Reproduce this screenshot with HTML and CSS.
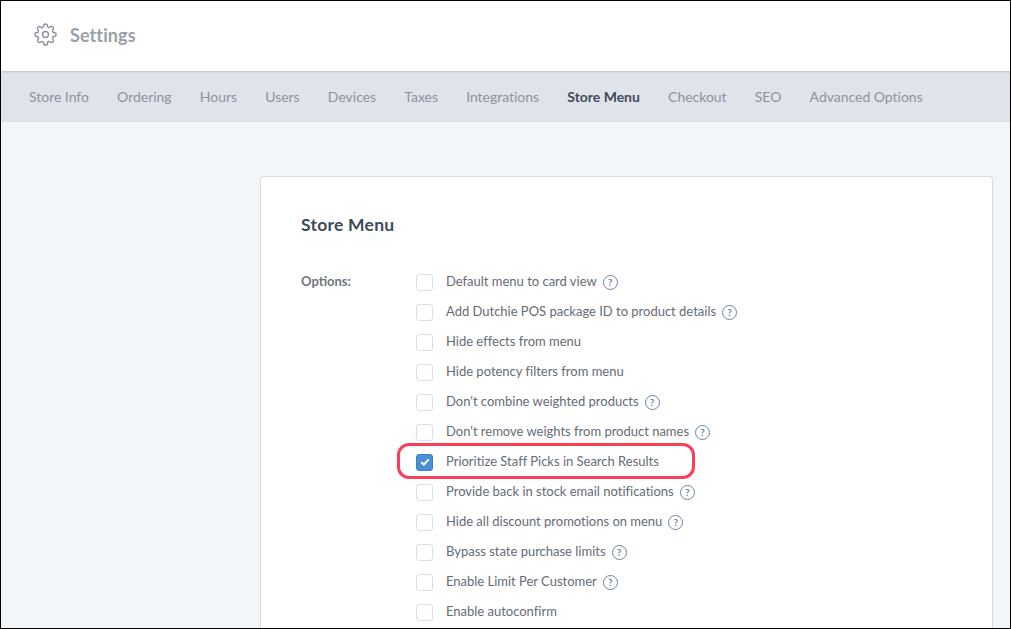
FILE: index.html
```html
<!DOCTYPE html>
<html lang="en">
<head>
<meta charset="utf-8">
<title>Settings</title>
<link rel="stylesheet" href="styles.css">
</head>
<body>
<div class="frame">
  <header class="header">
    <svg class="gear" viewBox="0 0 24 24" width="23" height="23" fill="none" stroke="#8d949e" stroke-width="1.5" stroke-linejoin="round">
      <circle cx="12" cy="12" r="3.1"/>
      <path d="M19.4 15a1.65 1.65 0 0 0 .33 1.82l.06.06a2 2 0 1 1-2.83 2.83l-.06-.06a1.65 1.65 0 0 0-1.82-.33 1.65 1.65 0 0 0-1 1.51V21a2 2 0 1 1-4 0v-.09A1.65 1.65 0 0 0 9 19.4a1.65 1.65 0 0 0-1.82.33l-.06.06a2 2 0 1 1-2.83-2.83l.06-.06A1.65 1.65 0 0 0 4.68 15a1.65 1.65 0 0 0-1.51-1H3a2 2 0 1 1 0-4h.09A1.65 1.65 0 0 0 4.6 9a1.65 1.65 0 0 0-.33-1.82l-.06-.06a2 2 0 1 1 2.83-2.83l.06.06A1.65 1.65 0 0 0 9 4.68a1.65 1.65 0 0 0 1-1.51V3a2 2 0 1 1 4 0v.09a1.65 1.65 0 0 0 1 1.51 1.65 1.65 0 0 0 1.82-.33l.06-.06a2 2 0 1 1 2.83 2.83l-.06.06A1.65 1.65 0 0 0 19.4 9a1.65 1.65 0 0 0 1.51 1H21a2 2 0 1 1 0 4h-.09a1.65 1.65 0 0 0-1.51 1z"/>
    </svg>
    <h1 class="page-title">Settings</h1>
  </header>
  <nav class="tabs">
    <a class="tab">Store Info</a>
    <a class="tab">Ordering</a>
    <a class="tab">Hours</a>
    <a class="tab">Users</a>
    <a class="tab">Devices</a>
    <a class="tab">Taxes</a>
    <a class="tab">Integrations</a>
    <a class="tab active">Store Menu</a>
    <a class="tab">Checkout</a>
    <a class="tab">SEO</a>
    <a class="tab">Advanced Options</a>
  </nav>
  <main class="content">
    <section class="card">
      <h2 class="card-title">Store Menu</h2>
      <div class="options">
        <div class="options-label">Options:</div>
        <ul class="option-list">
          <li class="option"><span class="box"></span><span class="text">Default menu to card view</span><span class="help">?</span></li>
          <li class="option"><span class="box"></span><span class="text">Add Dutchie POS package ID to product details</span><span class="help">?</span></li>
          <li class="option"><span class="box"></span><span class="text">Hide effects from menu</span></li>
          <li class="option"><span class="box"></span><span class="text">Hide potency filters from menu</span></li>
          <li class="option"><span class="box"></span><span class="text">Don't combine weighted products</span><span class="help">?</span></li>
          <li class="option"><span class="box"></span><span class="text">Don't remove weights from product names</span><span class="help">?</span></li>
          <li class="option highlighted"><span class="box checked"><svg viewBox="0 0 10 8" width="10" height="8"><path d="M1.2 4.2 3.8 6.6 8.8 1.4" fill="none" stroke="#fff" stroke-width="2"/></svg></span><span class="text">Prioritize Staff Picks in Search Results</span><span class="ring"></span></li>
          <li class="option"><span class="box"></span><span class="text">Provide back in stock email notifications</span><span class="help">?</span></li>
          <li class="option"><span class="box"></span><span class="text">Hide all discount promotions on menu</span><span class="help">?</span></li>
          <li class="option"><span class="box"></span><span class="text">Bypass state purchase limits</span><span class="help">?</span></li>
          <li class="option"><span class="box"></span><span class="text">Enable Limit Per Customer</span><span class="help">?</span></li>
          <li class="option"><span class="box"></span><span class="text">Enable autoconfirm</span></li>
        </ul>
      </div>
    </section>
  </main>
</div>
</body>
</html>
```
FILE: styles.css
```css
* { box-sizing: border-box; }
html, body { margin: 0; padding: 0; height: 100%; overflow: hidden; }
body { font-family: "Lato", "Liberation Sans", sans-serif; background: #f3f6f9; }
.frame { width: 1011px; height: 629px; border: 1px solid #000; overflow: hidden; background: #f3f6f9; display: flex; flex-direction: column; }
.header { height: 70px; flex: none; background: #fff; display: flex; align-items: center; padding: 0 0 3px 33px; gap: 13px; position: relative; box-shadow: 0 1px 2px rgba(120, 128, 140, .35); }
.gear { flex: none; }
.page-title { margin: 0; font-size: 18px; line-height: 22px; font-weight: 700; color: #9aa0a9; letter-spacing: .1px; }
.tabs { height: 51px; flex: none; background: #dfe3ea; display: flex; align-items: center; padding: 0 0 0 28px; gap: 28.2px; }
.tab { font-size: 14px; color: #8e949d; white-space: nowrap; letter-spacing: -.02px; }
.tab.active { font-weight: 700; color: #3f4a57; }
.content { flex: 1; min-height: 0; padding: 54px 17px 0 259px; }
.card { background: #fff; border: 1px solid #d5dae3; border-bottom: 0; border-radius: 4px 4px 0 0; padding: 38px 40px 0; height: 470px; }
.card-title { margin: 0; font-size: 17.5px; line-height: 20px; font-weight: 700; color: #3f4a57; letter-spacing: .25px; }
.options { display: flex; margin-top: 32px; }
.options-label { width: 115px; flex: none; font-size: 13px; line-height: 20px; font-weight: 700; color: #6f7680; padding-top: 4px; }
.option-list { list-style: none; margin: 0; padding: 0; flex: 1; }
.option { position: relative; height: 30px; display: flex; align-items: center; font-size: 13px; color: #656c76; }
.text { margin-top: -2px; letter-spacing: -.01px; }
.box { width: 17px; height: 17px; flex: none; border: 1px solid #dcdfe5; border-radius: 3px; background: #fff; margin-right: 13px; display: flex; align-items: center; justify-content: center; }
.box.checked { background: #4a8fd4; border-color: #3d7fc2; }
.help { width: 15px; height: 15px; margin-left: 6px; border: 1.5px solid #6c84a3; border-radius: 50%; font-size: 10px; line-height: 12px; font-weight: 700; text-align: center; color: #6c84a3; }
.ring { position: absolute; left: -19px; top: -4px; width: 298px; height: 36px; border: 3px solid #fb3f59; border-radius: 12px; }
```
